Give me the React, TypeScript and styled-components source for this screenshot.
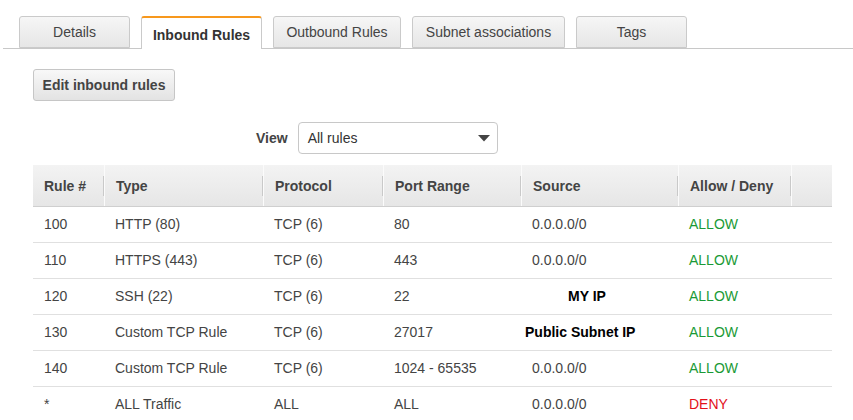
import React from "react";
import styled, { createGlobalStyle } from "styled-components";

const Global = createGlobalStyle`
  html, body { margin: 0; padding: 0; background: #fff; }
  body { font-family: "Liberation Sans", Arial, Helvetica, sans-serif; font-size: 14px; color: #444; }
`;

const Page = styled.div`
  width: 853px;
  height: 420px;
  overflow: hidden;
  padding-top: 16px;
  box-sizing: border-box;
`;

const TabBar = styled.div`
  display: flex;
  gap: 11px;
  margin-left: 3px;
  padding-left: 16px;
  border-bottom: 1px solid #c8c8c8;
  height: 32px;
`;

const Tab = styled.div<{ $w: number; $active?: boolean }>`
  box-sizing: border-box;
  width: ${(p) => p.$w}px;
  height: ${(p) => (p.$active ? 33 : 32)}px;
  display: flex;
  align-items: center;
  justify-content: center;
  border: 1px solid #cacaca;
  border-bottom: ${(p) => (p.$active ? "none" : "1px solid #cacaca")};
  border-top: ${(p) => (p.$active ? "2px solid #f7981d" : "1px solid #cacaca")};
  border-radius: 3px 3px 0 0;
  background: ${(p) => (p.$active ? "#fff" : "linear-gradient(#f6f6f6, #e6e6e6)")};
  font-weight: ${(p) => (p.$active ? 700 : 400)};
  color: ${(p) => (p.$active ? "#333" : "#444")};
  font-size: 14px;
  padding-top: ${(p) => (p.$active ? 2 : 0)}px;
`;

const Toolbar = styled.div`
  padding: 20px 0 0 33px;
`;

const Button = styled.button`
  box-sizing: border-box;
  width: 142px;
  height: 32px;
  border: 1px solid #c6c6c6;
  border-radius: 3px;
  background: linear-gradient(#f8f8f8, #e3e3e3);
  font-family: "Liberation Sans", Arial, sans-serif;
  font-weight: 700;
  font-size: 14px;
  color: #444;
  padding: 0;
`;

const ViewRow = styled.div`
  display: flex;
  align-items: center;
  gap: 10px;
  margin: 21px 0 0 256px;
`;

const ViewLabel = styled.span`
  font-weight: 700;
  color: #444;
`;

const Select = styled.div`
  box-sizing: border-box;
  width: 200px;
  height: 32px;
  border: 1px solid #c8c8c8;
  border-radius: 4px;
  display: flex;
  align-items: center;
  justify-content: space-between;
  padding: 0 7px 0 9px;
  color: #333;
`;

const Table = styled.div`
  margin: 11px 0 0 33px;
  width: 799px;
`;

const cols = "71px 159px 120px 138px 157px 113px 41px";

const HeaderRow = styled.div`
  display: grid;
  grid-template-columns: ${cols};
  height: 42px;
  box-sizing: border-box;
  background: linear-gradient(#f3f3f3, #e6e6e6);
  border-bottom: 1px solid #cfcfcf;
`;

const HeadCell = styled.div<{ $sep?: boolean }>`
  position: relative;
  display: flex;
  align-items: center;
  padding-left: 11px;
  font-weight: 700;
  color: #444;
  border-left: ${(p) => (p.$sep ? "1px solid #fbfbfb" : "none")};
  &::before {
    content: "";
    display: ${(p) => (p.$sep ? "block" : "none")};
    position: absolute;
    left: -2px;
    top: 11px;
    height: 20px;
    width: 1px;
    background: #c9c9c9;
  }
`;

const Row = styled.div`
  display: grid;
  grid-template-columns: ${cols};
  height: 36px;
  box-sizing: border-box;
  border-bottom: 1px solid #e0e0e0;
`;

const Cell = styled.div<{ $color?: string; $bold?: boolean; $pad?: number }>`
  display: flex;
  align-items: center;
  padding-left: ${(p) => p.$pad ?? 11}px;
  padding-bottom: 1px;
  color: ${(p) => p.$color ?? "#444"};
  font-weight: ${(p) => (p.$bold ? 700 : 400)};
  white-space: nowrap;
`;

type R = { n: string; type: string; proto: string; port: string; src: string; srcBold?: number; action: "ALLOW" | "DENY" };

const rows: R[] = [
  { n: "100", type: "HTTP (80)", proto: "TCP (6)", port: "80", src: "0.0.0.0/0", action: "ALLOW" },
  { n: "110", type: "HTTPS (443)", proto: "TCP (6)", port: "443", src: "0.0.0.0/0", action: "ALLOW" },
  { n: "120", type: "SSH (22)", proto: "TCP (6)", port: "22", src: "MY IP", srcBold: 47, action: "ALLOW" },
  { n: "130", type: "Custom TCP Rule", proto: "TCP (6)", port: "27017", src: "Public Subnet IP", srcBold: 4, action: "ALLOW" },
  { n: "140", type: "Custom TCP Rule", proto: "TCP (6)", port: "1024 - 65535", src: "0.0.0.0/0", action: "ALLOW" },
  { n: "*", type: "ALL Traffic", proto: "ALL", port: "ALL", src: "0.0.0.0/0", action: "DENY" },
];

const Arrow = () => (
  <svg width="12" height="7" viewBox="0 0 12 7">
    <polygon points="0,0 12,0 6,6.5" fill="#444" />
  </svg>
);

export default function App() {
  return (
    <Page>
      <Global />
      <TabBar>
        <Tab $w={111}>Details</Tab>
        <Tab $w={121} $active>Inbound Rules</Tab>
        <Tab $w={128}>Outbound Rules</Tab>
        <Tab $w={153}>Subnet associations</Tab>
        <Tab $w={111}>Tags</Tab>
      </TabBar>
      <Toolbar>
        <Button>Edit inbound rules</Button>
      </Toolbar>
      <ViewRow>
        <ViewLabel>View</ViewLabel>
        <Select>
          <span>All rules</span>
          <Arrow />
        </Select>
      </ViewRow>
      <Table>
        <HeaderRow>
          <HeadCell>Rule #</HeadCell>
          <HeadCell $sep>Type</HeadCell>
          <HeadCell $sep>Protocol</HeadCell>
          <HeadCell $sep>Port Range</HeadCell>
          <HeadCell $sep>Source</HeadCell>
          <HeadCell $sep>Allow / Deny</HeadCell>
          <HeadCell $sep></HeadCell>
        </HeaderRow>
        {rows.map((r) => (
          <Row key={r.n}>
            <Cell>{r.n}</Cell>
            <Cell>{r.type}</Cell>
            <Cell>{r.proto}</Cell>
            <Cell>{r.port}</Cell>
            {r.srcBold !== undefined ? (
              <Cell $bold $color="#000" $pad={r.srcBold}>{r.src}</Cell>
            ) : (
              <Cell>{r.src}</Cell>
            )}
            <Cell $color={r.action === "ALLOW" ? "#1a9a36" : "#e3101b"}>{r.action}</Cell>
            <Cell />
          </Row>
        ))}
      </Table>
    </Page>
  );
}
